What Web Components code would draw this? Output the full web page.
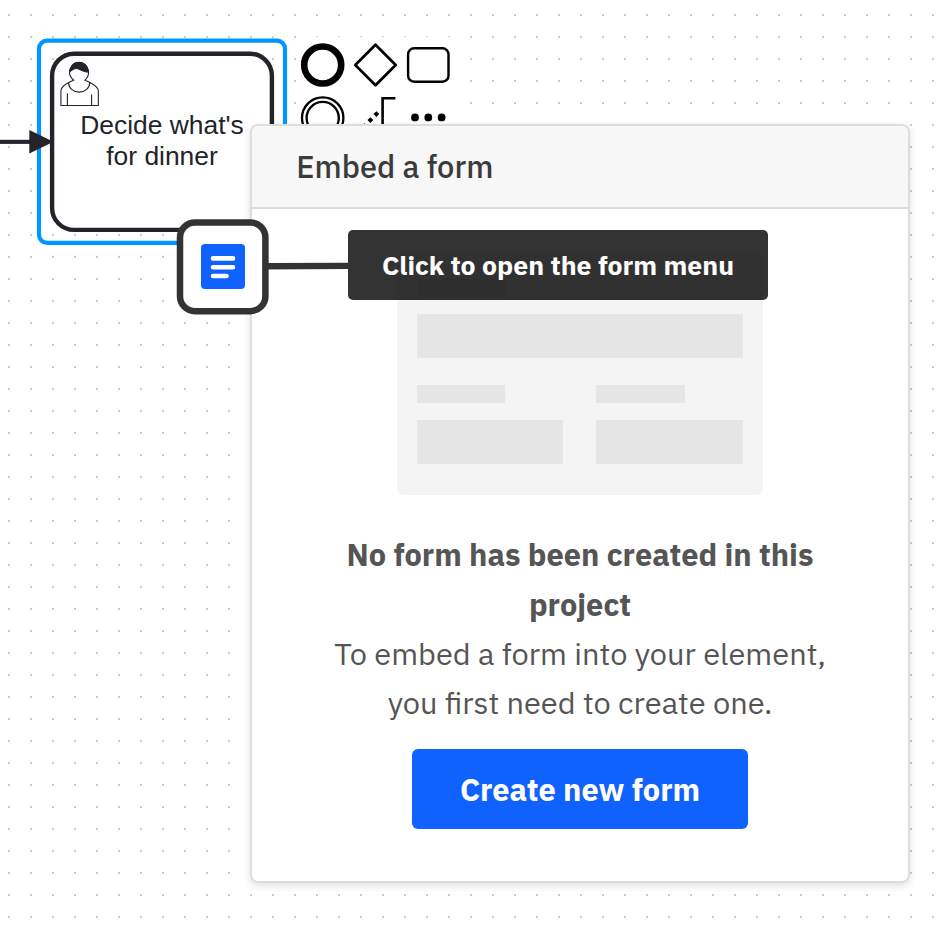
<!DOCTYPE html>
<html lang="en">
<head>
<meta charset="utf-8">
<title>Embed a form</title>
<style>
  html, body { margin: 0; height: 100%; overflow: hidden; background: #fff; }
  body { font-family: "IBM Plex Sans", "Noto Sans", sans-serif; }
</style>
</head>
<body>
<modeler-canvas>
  <sequence-flow></sequence-flow>
  <user-task>Decide what's for dinner</user-task>
  <context-pad></context-pad>
  <form-panel>
    <span slot="title">Embed a form</span>
    <form-placeholder slot="art"></form-placeholder>
    <span slot="heading">No form has been created in this project</span>
    <span slot="text">To embed a form into your element, you first need to create one.</span>
    <primary-button slot="action">Create new form</primary-button>
  </form-panel>
  <form-marker></form-marker>
  <hint-label>Click to open the form menu</hint-label>
</modeler-canvas>

<script>
const define = (name, html) => {
  const template = document.createElement('template');
  template.innerHTML = html;
  customElements.define(name, class extends HTMLElement {
    constructor() {
      super();
      this.attachShadow({ mode: 'open' }).append(template.content.cloneNode(true));
    }
  });
};

/* Free canvas with a 22px dot grid */
define('modeler-canvas', `
<style>
  :host { display: block; position: relative; width: 944px; height: 930px; overflow: hidden; background: #fff; }
  svg { position: absolute; inset: 0; }
</style>
<svg width="944" height="930">
  <defs><pattern id="grid" x="8" y="14" width="22" height="22" patternUnits="userSpaceOnUse">
    <rect width="2" height="2" fill="#ccc"/></pattern></defs>
  <rect width="944" height="930" fill="url(#grid)"/>
</svg>
<slot></slot>`);

define('sequence-flow', `
<style>
  :host { display: block; position: absolute; left: 0; top: 120px; z-index: 1; }
  svg { display: block; }
</style>
<svg width="60" height="44" fill="#22242a">
  <path d="M0 19.8H32v4.1H0z"/>
  <path d="M29.3 10v23.6L53.5 21.8z"/>
</svg>`);

define('user-task', `
<style>
  :host { display: flex; align-items: center; justify-content: center; box-sizing: border-box;
    position: absolute; left: 52px; top: 54px; width: 220px; height: 176px; padding: 0 20px;
    font: 26.4px/31.4px "Liberation Sans", Arial, sans-serif; color: #22242a; text-align: center; }
  svg { position: absolute; left: -20px; top: -20px; }
  span { position: relative; top: -1px; }
</style>
<svg width="260" height="220" fill="none">
  <rect x="7" y="6.6" width="246" height="202.2" rx="8" stroke="#0095ff" stroke-width="4.2"/>
  <rect x="20.1" y="19.7" width="219.8" height="176.2" rx="22" fill="#fff" fill-opacity=".95" stroke="#22242a" stroke-width="4.4"/>
  <g transform="translate(20 19.8) scale(2.2) translate(15 12)" stroke="#22242a" stroke-width=".5">
    <path fill="#fff" d="m0,0c.909-.845 1.594-2.049 1.594-3.385 0-2.554-1.805-4.622-4.357-4.622-2.552 0-4.288 2.068-4.288 4.622 0 1.348.974 2.562 1.896 3.405-.529.187-5.669 2.097-5.794 4.756v6.718h17v-6.718c0-2.298-5.528-4.595-6.051-4.776zm-8,6v5.5m11,0v-5"/>
    <path d="m2.162,1.009c0,2.447-2.158,4.431-4.821,4.431-2.665 0-4.822-1.981-4.822-4.431"/>
    <path fill="#22242a" d="m-6.9-3.8s2.251-2.358 4.274-1.177c2.024 1.181 4.221 1.537 4.124.965-.098-.57-.117-3.791-4.191-4.136-3.575.001-4.208 3.673-4.207 4.348z"/>
  </g>
</svg>
<span><slot></slot></span>`);

define('context-pad', `
<style>
  :host { display: block; position: absolute; left: 298px; top: 37px; padding: 3px 4px 0 0; background: #fff; }
  svg { display: block; }
</style>
<svg width="154" height="100" fill="none" stroke="#000">
  <circle cx="24.7" cy="25" r="18.5" stroke-width="6.6"/>
  <path d="M77.5 4.8 97.7 25 77.5 45.2 57.3 25z" stroke-width="2.7" stroke-linejoin="round"/>
  <rect x="110.1" y="8.3" width="40.4" height="33.4" rx="6" stroke-width="2.4"/>
  <circle cx="24.7" cy="78" r="20.7" stroke-width="2.3"/>
  <circle cx="24.7" cy="78" r="16.1" stroke-width="2.3"/>
  <path d="M84.6 100V58.2H97.4" stroke-width="2.6"/>
  <path stroke="none" fill="#000" d="m78.4 71.2 2.9 2.9-2.9 2.9-2.9-2.9zm-6 6 2.9 2.9-2.9 2.9-2.9-2.9zm-6 6 2.9 2.9-2.9 2.9-2.9-2.9z"/>
  <g stroke="none" fill="#000"><circle cx="117" cy="77.4" r="3.9"/><circle cx="130.3" cy="77.4" r="3.9"/><circle cx="143.6" cy="77.4" r="3.9"/></g>
</svg>`);

define('form-panel', `
<style>
  :host { display: flex; flex-direction: column; box-sizing: border-box; position: absolute;
    left: 250px; top: 124px; width: 660px; height: 759px; z-index: 2; overflow: hidden;
    background: #fff; border: 2px solid #ddd; border-radius: 8px;
    box-shadow: 0 3px 8px rgba(0,0,0,.12); color: #555; font-size: 30.8px; }
  header { box-sizing: border-box; height: 83px; flex: none; padding-left: 44.3px;
    background: #f7f7f7; border-bottom: 2px solid #ddd; color: #3b3b3b;
    font-weight: 500; line-height: 81px; }
  main { display: flex; flex-direction: column; align-items: center; text-align: center;
    padding: 43.5px 66px 0; line-height: 49.28px; }
  h2 { margin: 35.9px 0 0; font-size: inherit; font-weight: 700; width: 500px; }
  p { margin: 0; width: 526px; }
  footer { margin-top: 21.6px; }
</style>
<header><slot name="title"></slot></header>
<main>
  <slot name="art"></slot>
  <h2><slot name="heading"></slot></h2>
  <p><slot name="text"></slot></p>
  <footer><slot name="action"></slot></footer>
</main>`);

/* Skeleton of a form: one wide field and two half-width fields */
define('form-placeholder', `
<style>
  :host { display: grid; grid-template-columns: 146.5px 146.5px; column-gap: 33px; align-content: start;
    box-sizing: border-box; width: 365.5px; height: 242px; padding: 26.7px 19.7px 0;
    background: #f4f4f4; border-radius: 6px; }
  i { display: block; background: #e5e5e5; height: 44px; }
  i.label { width: 88.5px; height: 17.6px; margin-bottom: 17.6px; }
  i.wide { grid-column: 1 / 3; margin-bottom: 26.6px; }
  i.label.solo { grid-column: 1 / 3; }
</style>
<i class="label solo"></i>
<i class="wide"></i>
<i class="label"></i><i class="label"></i>
<i></i><i></i>`);

define('primary-button', `
<style>
  :host { display: block; }
  button { display: block; width: 336px; height: 80px; padding: 0; border: 0; border-radius: 6px;
    background: #0f62fe; color: #fff; font: inherit; font-weight: 700; line-height: 80px; }
</style>
<button><slot></slot></button>`);

/* Framed form icon with the line that leads to its hint */
define('form-marker', `
<style>
  :host { display: block; position: absolute; left: 170px; top: 210px; z-index: 3; }
  svg { display: block; }
</style>
<svg width="178" height="110">
  <path d="M96 56.3 178 55.9" stroke="#333" stroke-width="6.4"/>
  <rect x="10" y="12.5" width="85.4" height="88.7" rx="15" fill="#fff" stroke="#333" stroke-width="6.5"/>
  <rect x="31" y="34" width="44" height="45" rx="4" fill="#0f62fe"/>
  <path d="M43 48.4H63M43 57.2H63M43 66H56.5" stroke="#fff" stroke-width="4.6" stroke-linecap="round"/>
</svg>`);

define('hint-label', `
<style>
  :host { display: block; position: absolute; left: 348px; top: 230px; width: 420px; height: 70px;
    z-index: 4; border-radius: 5px; background: rgba(0,0,0,.8); color: #fff; text-align: center;
    font-weight: 700; font-size: 26.7px; line-height: 70px; }
</style>
<slot></slot>`);
</script>
</body>
</html>
